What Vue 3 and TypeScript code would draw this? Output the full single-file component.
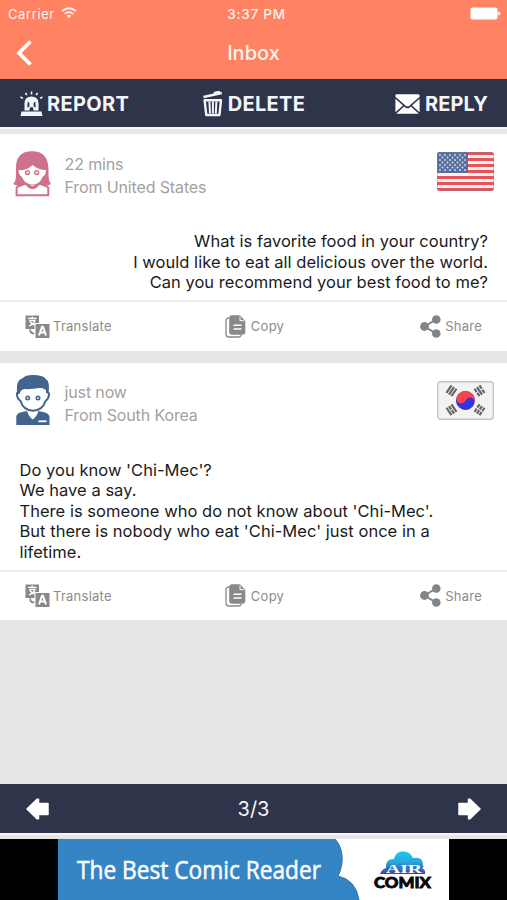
<script setup lang="ts">
interface Message {
  id: number
  time: string
  country: string
  flag: 'us' | 'kr'
  gender: 'female' | 'male'
  mine: boolean
  lines: string[]
}

const messages: Message[] = [
  {
    id: 1,
    time: '22 mins',
    country: 'United States',
    flag: 'us',
    gender: 'female',
    mine: true,
    lines: [
      'What is favorite food in your country?',
      'I would like to eat all delicious over the world.',
      'Can you recommend your best food to me?',
    ],
  },
  {
    id: 2,
    time: 'just now',
    country: 'South Korea',
    flag: 'kr',
    gender: 'male',
    mine: false,
    lines: [
      "Do you know 'Chi-Mec'?",
      'We have a say.',
      "There is someone who do not know about 'Chi-Mec'.",
      "But there is nobody who eat 'Chi-Mec' just once in a",
      'lifetime.',
    ],
  },
]

const stripes = [0, 1, 2, 3, 4, 5, 6]
const stars: { x: number; y: number }[] = []
for (let row = 0; row < 7; row++) {
  const count = row % 2 === 0 ? 6 : 5
  for (let i = 0; i < count; i++) {
    stars.push({ x: 3 + i * 5 + (row % 2) * 2.5, y: 3 + row * 2.5 })
  }
}
</script>

<template>
  <main class="screen">
    <header class="header">
      <div class="status">
        <div class="carrier">
          <span>Carrier</span>
          <svg width="16" height="12" viewBox="0 0 16 12" fill="none" stroke="#fff3ee" stroke-width="1.7">
            <path d="M1 4.2Q8-1.7 15 4.2M3.6 6.9Q8 3.2 12.4 6.9" />
            <path d="M5.6 8.6Q8 6.8 10.4 8.6L8 11.3Z" fill="#fff3ee" stroke="none" />
          </svg>
        </div>
        <span class="clock">3:37 PM</span>
        <svg class="battery" width="31" height="13" viewBox="0 0 31 13" fill="#fff">
          <rect x="0.5" y="0.5" width="27" height="12" rx="2" />
          <path d="M28.2 4.5Q30.2 5 30.2 6.5T28.2 8.5Z" />
        </svg>
      </div>
      <div class="nav">
        <svg class="back" width="17" height="26" viewBox="0 0 17 26" fill="none" stroke="#fff" stroke-width="3.8">
          <path d="M14.5 1.5L3 13L14.5 24.5" />
        </svg>
        <h1>Inbox</h1>
      </div>
    </header>

    <div class="toolbar">
      <button class="report">
        <svg width="24" height="26" viewBox="0 0 24 26" fill="#f4f5fb">
          <path d="M1.5 20.5H21.5L22.5 25H.5Z" />
          <path fill-rule="evenodd" d="M4.5 19.5V12Q4.8 5.4 11.5 5.4T18.5 12V19.5H13.5L13 16.2H10L9.5 19.5ZM7.8 10.2L7.2 16.5L9.4 15.5V12.2ZM15.2 10.2L13.6 12.2V15.5L15.8 16.5Z" />
          <path d="M11.5 .5V3.5M5.5 1.8L6.8 4.2M17.5 1.8L16.2 4.2M.5 6L3 7.4M22.5 6L20 7.4" stroke="#f4f5fb" stroke-width="1.6" />
        </svg>
        <span>REPORT</span>
      </button>
      <button class="delete">
        <svg width="20" height="26" viewBox="0 0 20 26" fill="none" stroke="#f4f5fb">
          <path d="M.5 6L18.8 2M11 3.5L12 1.8L16 1L16.5 2.2" stroke-width="2.4" />
          <path d="M1.6 9.2H18L16.5 24H3.3Z" stroke-width="2.4" stroke-linejoin="round" />
          <path d="M6.4 10.5L7 22.5M9.9 10.5V22.5M13.4 10.5L12.8 22.5" stroke-width="2" />
        </svg>
        <span>DELETE</span>
      </button>
      <button class="reply">
        <svg width="25" height="20" viewBox="0 0 25 20" fill="#fff">
          <path d="M.4 1.5Q.5.2 2 .2H23Q24.5.2 24.6 1.5V2.7L14.6 11.6Q12.5 13.3 10.4 11.6L.4 2.7Z" />
          <path d="M.4 4.8L8 11.5L.4 18.2ZM24.6 4.8L17 11.5L24.6 18.2ZM9.1 12.5L10.2 13.4Q12.5 15.2 14.8 13.4L15.9 12.5L23.8 19.8H1.2Z" />
        </svg>
        <span>REPLY</span>
      </button>
    </div>

    <section class="thread">
      <article v-for="message in messages" :key="message.id" class="card">
        <div class="sender">
          <svg v-if="message.gender === 'female'" class="avatar" width="38" height="50" viewBox="0 0 38 50">
            <path fill="#ce728c" d="M3 22C2 8 7 1.2 19 1.2S36 8 35.5 22C35.5 29 36 31 38 34Q34 37 27 35H10Q4 37 .2 34C3 31 3 28 3 22Z" />
            <path fill="#fff" d="M5.5 20Q14 21 19.5 15Q25 20 33 20Q33 25 29.5 27C27 33 24 34.5 19.3 34.5S11 32 9 27Q5.5 25 5.5 20Z" />
            <path fill="#fff" stroke="#ce728c" stroke-width="2" d="M3.6 45.3V38Q4 36 8 35.4L13 33.6Q16 38 19.5 38T26 33.6L31 35.4Q35 36 35.3 38V45.3Z" />
            <path fill="none" stroke="#ce728c" stroke-width="2" d="M14 34Q19.5 40 25 34" />
            <g fill="#eadbe1" stroke="#bd7189" stroke-width="1.2"><circle cx="14.5" cy="22.5" r="2" /><circle cx="23.7" cy="22.5" r="2" /></g>
          </svg>
          <svg v-else class="avatar male" width="38" height="52" viewBox="0 0 38 52">
            <path fill="#fff" stroke="#42648d" stroke-width="2" d="M5 18Q2.5 18 3 21Q3.5 25 6.5 27Q9.5 36.5 19 36.7Q28.5 36.5 31.5 27Q34.5 25 35 21Q35 18 33 18V12H5Z" />
            <path fill="#42648d" d="M3.3 20C1.8 8 5 5.5 9 4Q11 1 19 1Q29 1 31.5 4.7Q37 8 34 20L31.8 16Q29 13.4 25.5 14Q16 15.5 10.5 15Q6.5 15.5 5.5 20Z" />
            <path fill="#42648d" d="M2.3 51V43Q2.5 39.5 6 38.5L13 37Q15 43 18.7 45.5Q22.5 43 24.5 37L31 38.5Q35 39.5 35.5 43V51Z" />
            <path stroke="#fff" stroke-width="1.8" d="M24.5 47.3H32.5" />
            <g fill="#d1e0f1" stroke="#42648d" stroke-width="1.4"><circle cx="13.7" cy="24" r="1.8" /><circle cx="24" cy="24" r="1.8" /></g>
          </svg>
          <div class="meta">
            <span>{{ message.time }}</span>
            <span>From {{ message.country }}</span>
          </div>
          <svg v-if="message.flag === 'us'" class="flag" width="57" height="39" viewBox="0 0 57 39">
            <defs><clipPath id="us-shape"><rect width="57" height="39" rx="3" /></clipPath></defs>
            <g clip-path="url(#us-shape)">
              <rect width="57" height="39" fill="#fff1f1" />
              <rect v-for="stripe in stripes" :key="stripe" x="0" :y="stripe * 6" width="57" height="3" fill="#e85357" />
              <rect width="31" height="21" fill="#566f9f" />
              <circle v-for="(star, i) in stars" :key="i" :cx="star.x" :cy="star.y" r="0.95" fill="#d5dce9" />
            </g>
            <rect x=".5" y=".5" width="56" height="38" rx="3" fill="none" stroke="#8c7990" stroke-opacity=".45" />
          </svg>
          <svg v-else class="flag" width="57" height="39" viewBox="0 0 57 39">
            <rect x=".7" y=".7" width="55.6" height="37.6" rx="3" fill="#f3f3f3" stroke="#c4c4c4" stroke-width="1.4" />
            <g transform="rotate(22 28.5 19.5)">
              <circle cx="28.5" cy="19.5" r="9.5" fill="#3434dc" />
              <path fill="#fa434b" d="M19 19.5A9.5 9.5 0 0 1 38 19.5A4.75 4.75 0 0 0 28.5 19.5A4.75 4.75 0 0 1 19 19.5Z" />
            </g>
            <g stroke="#666" stroke-width="2.2">
              <path d="M-4.5-3H4.5M-4.5 0H4.5M-4.5 3H4.5" transform="translate(14.5 9.8) rotate(-56)" />
              <path d="M-4.5-3H-.5M.5-3H4.5M-4.5 0H4.5M-4.5 3H-.5M.5 3H4.5" transform="translate(42.5 9.8) rotate(56)" />
              <path d="M-4.5-3H4.5M-4.5 0H-.5M.5 0H4.5M-4.5 3H4.5" transform="translate(14.5 28.8) rotate(56)" />
              <path d="M-4.5-3H-.5M.5-3H4.5M-4.5 0H-.5M.5 0H4.5M-4.5 3H-.5M.5 3H4.5" transform="translate(42.5 28.8) rotate(-56)" />
            </g>
          </svg>
        </div>

        <div class="body" :class="{ mine: message.mine }">
          <p v-for="line in message.lines" :key="line">{{ line }}</p>
        </div>

        <div class="actions">
          <button class="translate">
            <svg width="25" height="23" viewBox="0 0 25 23">
              <path fill="#898989" d="M.5.5H14V8H9.5V14H.5Z" />
              <path fill="none" stroke="#fff" stroke-width="1.3" d="M3 3.4H11.5M7.2 1.5V3.4M4.5 5.3H10Q8.8 9 4 11M4.6 5.5Q6 9 10 10" />
              <path fill="none" stroke="#898989" stroke-width="1.8" d="M5.2 14.5Q5 18.5 9.3 18.4" />
              <rect x="10.5" y="9" width="14" height="14" fill="#898989" />
              <path fill="none" stroke="#fff" stroke-width="2" d="M14 20.5L17 11.8H18L21 20.5M15.2 17.5H19.8" />
            </svg>
            <span>Translate</span>
          </button>
          <button class="copy">
            <svg width="21" height="23" viewBox="0 0 21 23">
              <path fill="none" stroke="#898989" stroke-width="1.3" d="M4 3Q1 3 1 6V19Q1 22 4 22H13Q16 22 16 20" />
              <path fill="#898989" d="M7 .3H15L20.3 6V17Q20.3 19.7 17.5 19.7H7Q4.2 19.7 4.2 17V3Q4.2.3 7 .3Z" />
              <path fill="none" stroke="#fff" stroke-width="1.5" d="M8.5 10.3H16.5M8.5 14H16.5" />
              <path fill="none" stroke="#fff" stroke-width="1" d="M15 1.5V5.7H19" />
            </svg>
            <span>Copy</span>
          </button>
          <button class="share">
            <svg width="21" height="23" viewBox="0 0 21 23" fill="#848484">
              <path d="M16 4.5L4.5 11.5L16 18.5" fill="none" stroke="#848484" stroke-width="2" />
              <circle cx="16.3" cy="4.5" r="4.3" /><circle cx="4.5" cy="11.5" r="4.4" /><circle cx="16.3" cy="18.5" r="4.3" />
            </svg>
            <span>Share</span>
          </button>
        </div>
      </article>
    </section>

    <nav class="pager">
      <svg width="23" height="22" viewBox="0 0 23 22" fill="#fff" stroke="#fff" stroke-width="1.5" stroke-linejoin="round">
        <path d="M1 11L11 1.2H12.5V5.5H22V16.5H12.5V20.8H11Z" />
      </svg>
      <span>3/3</span>
      <svg width="23" height="22" viewBox="0 0 23 22" fill="#fff" stroke="#fff" stroke-width="1.5" stroke-linejoin="round">
        <path d="M22 11L12 1.2H10.5V5.5H1V16.5H10.5V20.8H12Z" />
      </svg>
    </nav>

    <footer class="ad">
      <svg width="391" height="61" viewBox="0 0 391 61">
        <rect width="391" height="61" fill="#fff" />
        <path fill="#3584c3" d="M0 0H277C286 10 286 25 280 37Q298 41 301 61H0Z" />
        <path fill="none" stroke="#2b72ac" stroke-width="1" d="M277 0C286 10 286 25 280 37Q298 41 301 61" />
        <text class="ad-copy" x="19" y="40.3" textLength="244" lengthAdjust="spacingAndGlyphs">The Best Comic Reader</text>
        <defs>
          <linearGradient id="cloud" x1="0" y1="0" x2="0" y2="1">
            <stop offset="0" stop-color="#16cce9" /><stop offset=".45" stop-color="#29a9e0" /><stop offset="1" stop-color="#3d459e" />
          </linearGradient>
        </defs>
        <path fill="url(#cloud)" d="M322 35Q324 30 328 29Q327 20 336 20Q338 12 345 12.5Q352 12 355 19Q365 17 365 26Q366 29 364 29Q368 31 367 35Z" />
        <text class="ad-air" x="328" y="34" textLength="36" lengthAdjust="spacingAndGlyphs">AIR</text>
        <text class="ad-comix" x="316" y="48.5" textLength="57" lengthAdjust="spacingAndGlyphs">COMIX</text>
      </svg>
    </footer>
  </main>
</template>

<style>
body {
  margin: 0;
  background: #e6e6e6;
}
</style>

<style scoped>
.screen {
  display: flex;
  flex-direction: column;
  width: 507px;
  height: 900px;
  overflow: hidden;
  background: #e6e6e6;
  font-family: Inter, "Liberation Sans", sans-serif;
}
svg {
  display: block;
  flex: none;
}
button {
  display: flex;
  align-items: center;
  padding: 0;
  border: 0;
  background: none;
  font-family: inherit;
  white-space: nowrap;
}
.header {
  flex: none;
  height: 79px;
  background: #ff8262;
  color: #fff3ee;
}
.status {
  display: grid;
  grid-template-columns: 1fr auto 1fr;
  align-items: center;
  height: 27px;
  padding: 0 6px 0 8px;
  font-size: 13px;
}
.carrier {
  display: flex;
  align-items: center;
  gap: 6px;
  letter-spacing: 0.6px;
}
.carrier svg {
  margin-top: -2px;
}
.clock {
  padding-left: 4px;
  font-size: 13.5px;
  font-weight: 500;
  letter-spacing: 0.75px;
}
.battery {
  justify-self: end;
}
.nav {
  display: grid;
  grid-template-columns: 1fr auto 1fr;
  align-items: center;
  height: 51px;
}
.back {
  margin-left: 16px;
}
h1 {
  margin: 0;
  font-size: 20px;
  font-weight: 500;
}
.toolbar {
  display: grid;
  flex: none;
  grid-template-columns: 1fr auto 1fr;
  height: 47px;
  padding: 1px 19px 0 20px;
  border-bottom: 2px solid #f5f6f6;
  background: #2e3449;
}
.toolbar button {
  gap: 5px;
  color: #f4f5fb;
  font-size: 20px;
  font-weight: 700;
  letter-spacing: 0.35px;
}
.toolbar .report {
  gap: 3px;
}
.toolbar .reply {
  justify-self: end;
  letter-spacing: 0.1px;
}
.thread {
  display: flex;
  flex: 1;
  flex-direction: column;
  gap: 12px;
  padding-top: 5px;
  background: #e6e6e6;
}
.card {
  background: #fff;
}
.sender {
  display: flex;
  align-items: flex-start;
  height: 97px;
  padding: 0 13px;
  box-sizing: border-box;
}
.avatar {
  margin-top: 16px;
}
.avatar.male {
  margin-top: 11px;
  margin-left: 1px;
  margin-right: -1px;
}
.meta {
  display: flex;
  flex: 1;
  flex-direction: column;
  margin: 18.5px 0 0 13.5px;
  color: #a2a2a2;
  font-size: 16px;
  letter-spacing: -0.13px;
  line-height: 23px;
}
.flag {
  margin-top: 18px;
}
.body {
  padding: 0 19px 7.5px 19.5px;
  color: #1b1b1b;
  font-size: 16.5px;
  letter-spacing: 0.03px;
  line-height: 20.5px;
}
.body.mine {
  text-align: right;
}
.body p {
  margin: 0;
  white-space: nowrap;
}
.actions {
  display: grid;
  grid-template-columns: 1fr auto 1fr;
  height: 48px;
  padding: 0 24px 0.5px 25px;
  border-top: 2px solid #ececec;
}
.actions button {
  gap: 4px;
  color: #8b8b8b;
  font-size: 13px;
  letter-spacing: 0.25px;
}
.actions .translate {
  gap: 3px;
}
.actions .copy {
  gap: 5px;
  padding-left: 1px;
}
.actions .share {
  justify-self: end;
  padding-right: 1px;
}
.pager {
  display: flex;
  flex: none;
  align-items: center;
  justify-content: space-between;
  height: 49px;
  padding: 0 26px;
  border-bottom: 2px solid #f5f5f5;
  margin-bottom: 4px;
  background: #2e3449;
  color: #f4f5fb;
  font-size: 20px;
}
.ad {
  display: flex;
  flex: none;
  justify-content: center;
  height: 61px;
  background: #000;
}
.ad-copy {
  fill: #f8fbff;
  stroke: #f8fbff;
  stroke-width: 0.6px;
  font: 400 26px "Open Sans", sans-serif;
}
.ad-air {
  fill: #fff;
  font: 700 13px "Liberation Serif", serif;
}
.ad-comix {
  fill: #080808;
  stroke: #080808;
  stroke-width: 0.8px;
  font: 900 15px Lato, sans-serif;
}
</style>
